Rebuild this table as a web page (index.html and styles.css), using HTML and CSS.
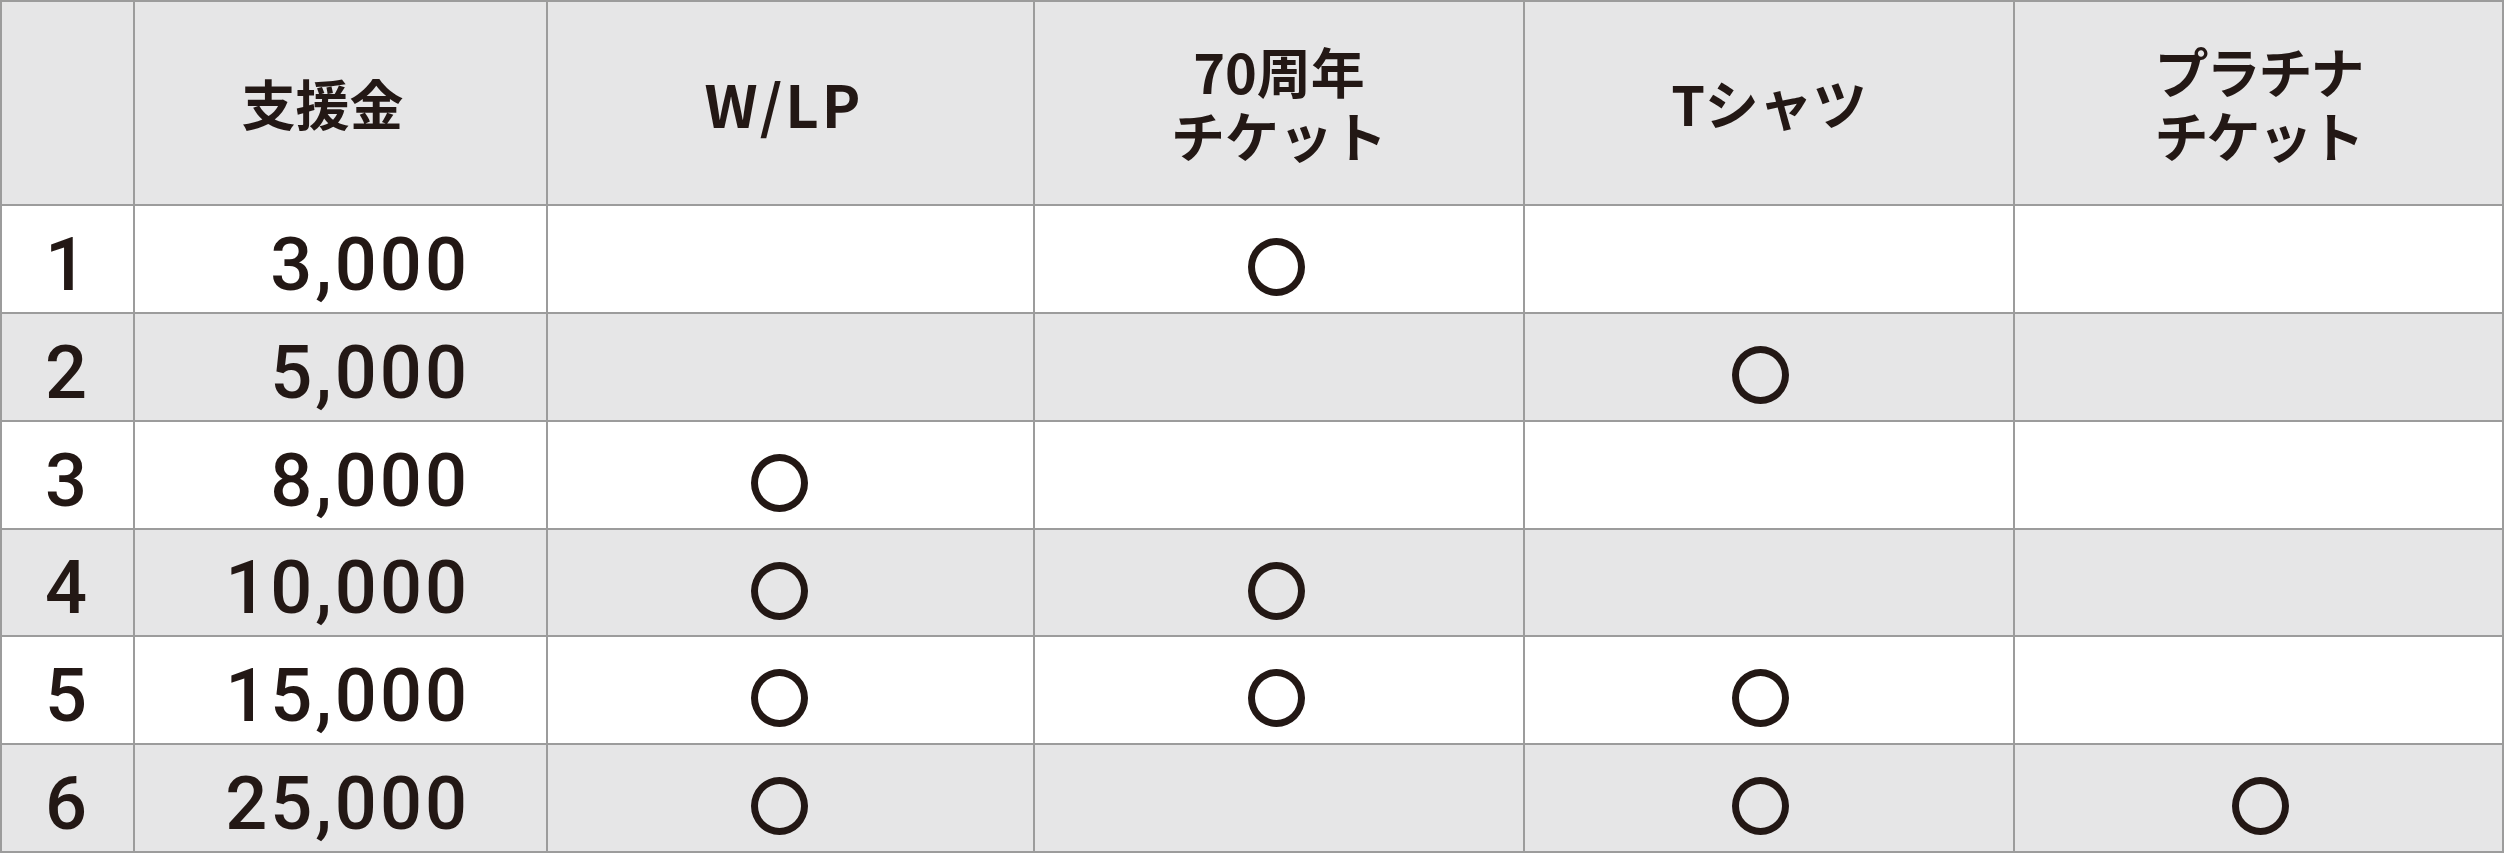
FILE: index.html
```html
<!DOCTYPE html>
<html lang="ja">
<head>
<meta charset="utf-8">
<title>支援金</title>
<link rel="stylesheet" href="styles.css">
</head>
<body>
<div class="grid">
  <div class="cell head"></div>
  <div class="cell head amount-head"><p class="label">支援金</p></div>
  <div class="cell head"><p class="label latin">W/LP</p></div>
  <div class="cell head"><p class="label">70周年<br>チケット</p></div>
  <div class="cell head"><p class="label">Tシャツ</p></div>
  <div class="cell head"><p class="label kana">プラチナ<br>チケット</p></div>

  <div class="cell num">1</div>
  <div class="cell amount">3,000</div>
  <div class="cell c-wlp"></div>
  <div class="cell c-70"><i class="mark"></i></div>
  <div class="cell c-t"></div>
  <div class="cell c-p"></div>

  <div class="cell num alt">2</div>
  <div class="cell amount alt">5,000</div>
  <div class="cell alt c-wlp"></div>
  <div class="cell alt c-70"></div>
  <div class="cell alt c-t"><i class="mark"></i></div>
  <div class="cell alt c-p"></div>

  <div class="cell num">3</div>
  <div class="cell amount">8,000</div>
  <div class="cell c-wlp"><i class="mark"></i></div>
  <div class="cell c-70"></div>
  <div class="cell c-t"></div>
  <div class="cell c-p"></div>

  <div class="cell num alt">4</div>
  <div class="cell amount alt">10,000</div>
  <div class="cell alt c-wlp"><i class="mark"></i></div>
  <div class="cell alt c-70"><i class="mark"></i></div>
  <div class="cell alt c-t"></div>
  <div class="cell alt c-p"></div>

  <div class="cell num">5</div>
  <div class="cell amount">15,000</div>
  <div class="cell c-wlp"><i class="mark"></i></div>
  <div class="cell c-70"><i class="mark"></i></div>
  <div class="cell c-t"><i class="mark"></i></div>
  <div class="cell c-p"></div>

  <div class="cell num alt">6</div>
  <div class="cell amount alt">25,000</div>
  <div class="cell alt c-wlp"><i class="mark"></i></div>
  <div class="cell alt c-70"></div>
  <div class="cell alt c-t"><i class="mark"></i></div>
  <div class="cell alt c-p"><i class="mark"></i></div>
</div>
</body>
</html>
```
FILE: styles.css
```css
html, body {
  margin: 0;
  padding: 0;
  background: #ffffff;
}

.grid {
  display: grid;
  grid-template-columns: 131px 411px 485px 488px 488px 487px;
  grid-template-rows: 202px 106px 106px 106px 105px 106px 106px;
  gap: 2px;
  padding: 2px;
  width: 2504px;
  box-sizing: border-box;
  background: #9c9c9c;
  color: #231815;
}

.cell {
  background: #ffffff;
  display: flex;
  align-items: center;
  justify-content: center;
}

.alt,
.head {
  background: #e6e6e7;
}

.head {
  font-family: "Noto Sans CJK JP", sans-serif;
  font-weight: 700;
  font-size: 54px;
  text-align: center;
}

.label {
  margin: 0;
  line-height: 64px;
}

.amount-head {
  padding-right: 36px;
}

.latin {
  font-size: 58px;
  letter-spacing: 3px;
  padding-left: 3px;
  margin-right: 16px;
}

.kana {
  letter-spacing: -2px;
}

.num,
.amount {
  font-family: Roboto, "Liberation Sans", sans-serif;
  font-weight: 500;
  font-size: 74px;
  letter-spacing: 3px;
  padding-top: 10px;
}

.amount {
  justify-content: flex-end;
  padding-right: 76px;
}

.mark {
  display: block;
  width: 57px;
  height: 58px;
  box-sizing: border-box;
  border: 7px solid #231815;
  border-radius: 50%;
  margin-top: 16px;
}

.c-wlp .mark {
  margin-right: 22px;
}

.c-70 .mark {
  margin-right: 6px;
}

.c-t .mark {
  margin-right: 18px;
}

.c-p .mark {
  margin-left: 4px;
}
```
